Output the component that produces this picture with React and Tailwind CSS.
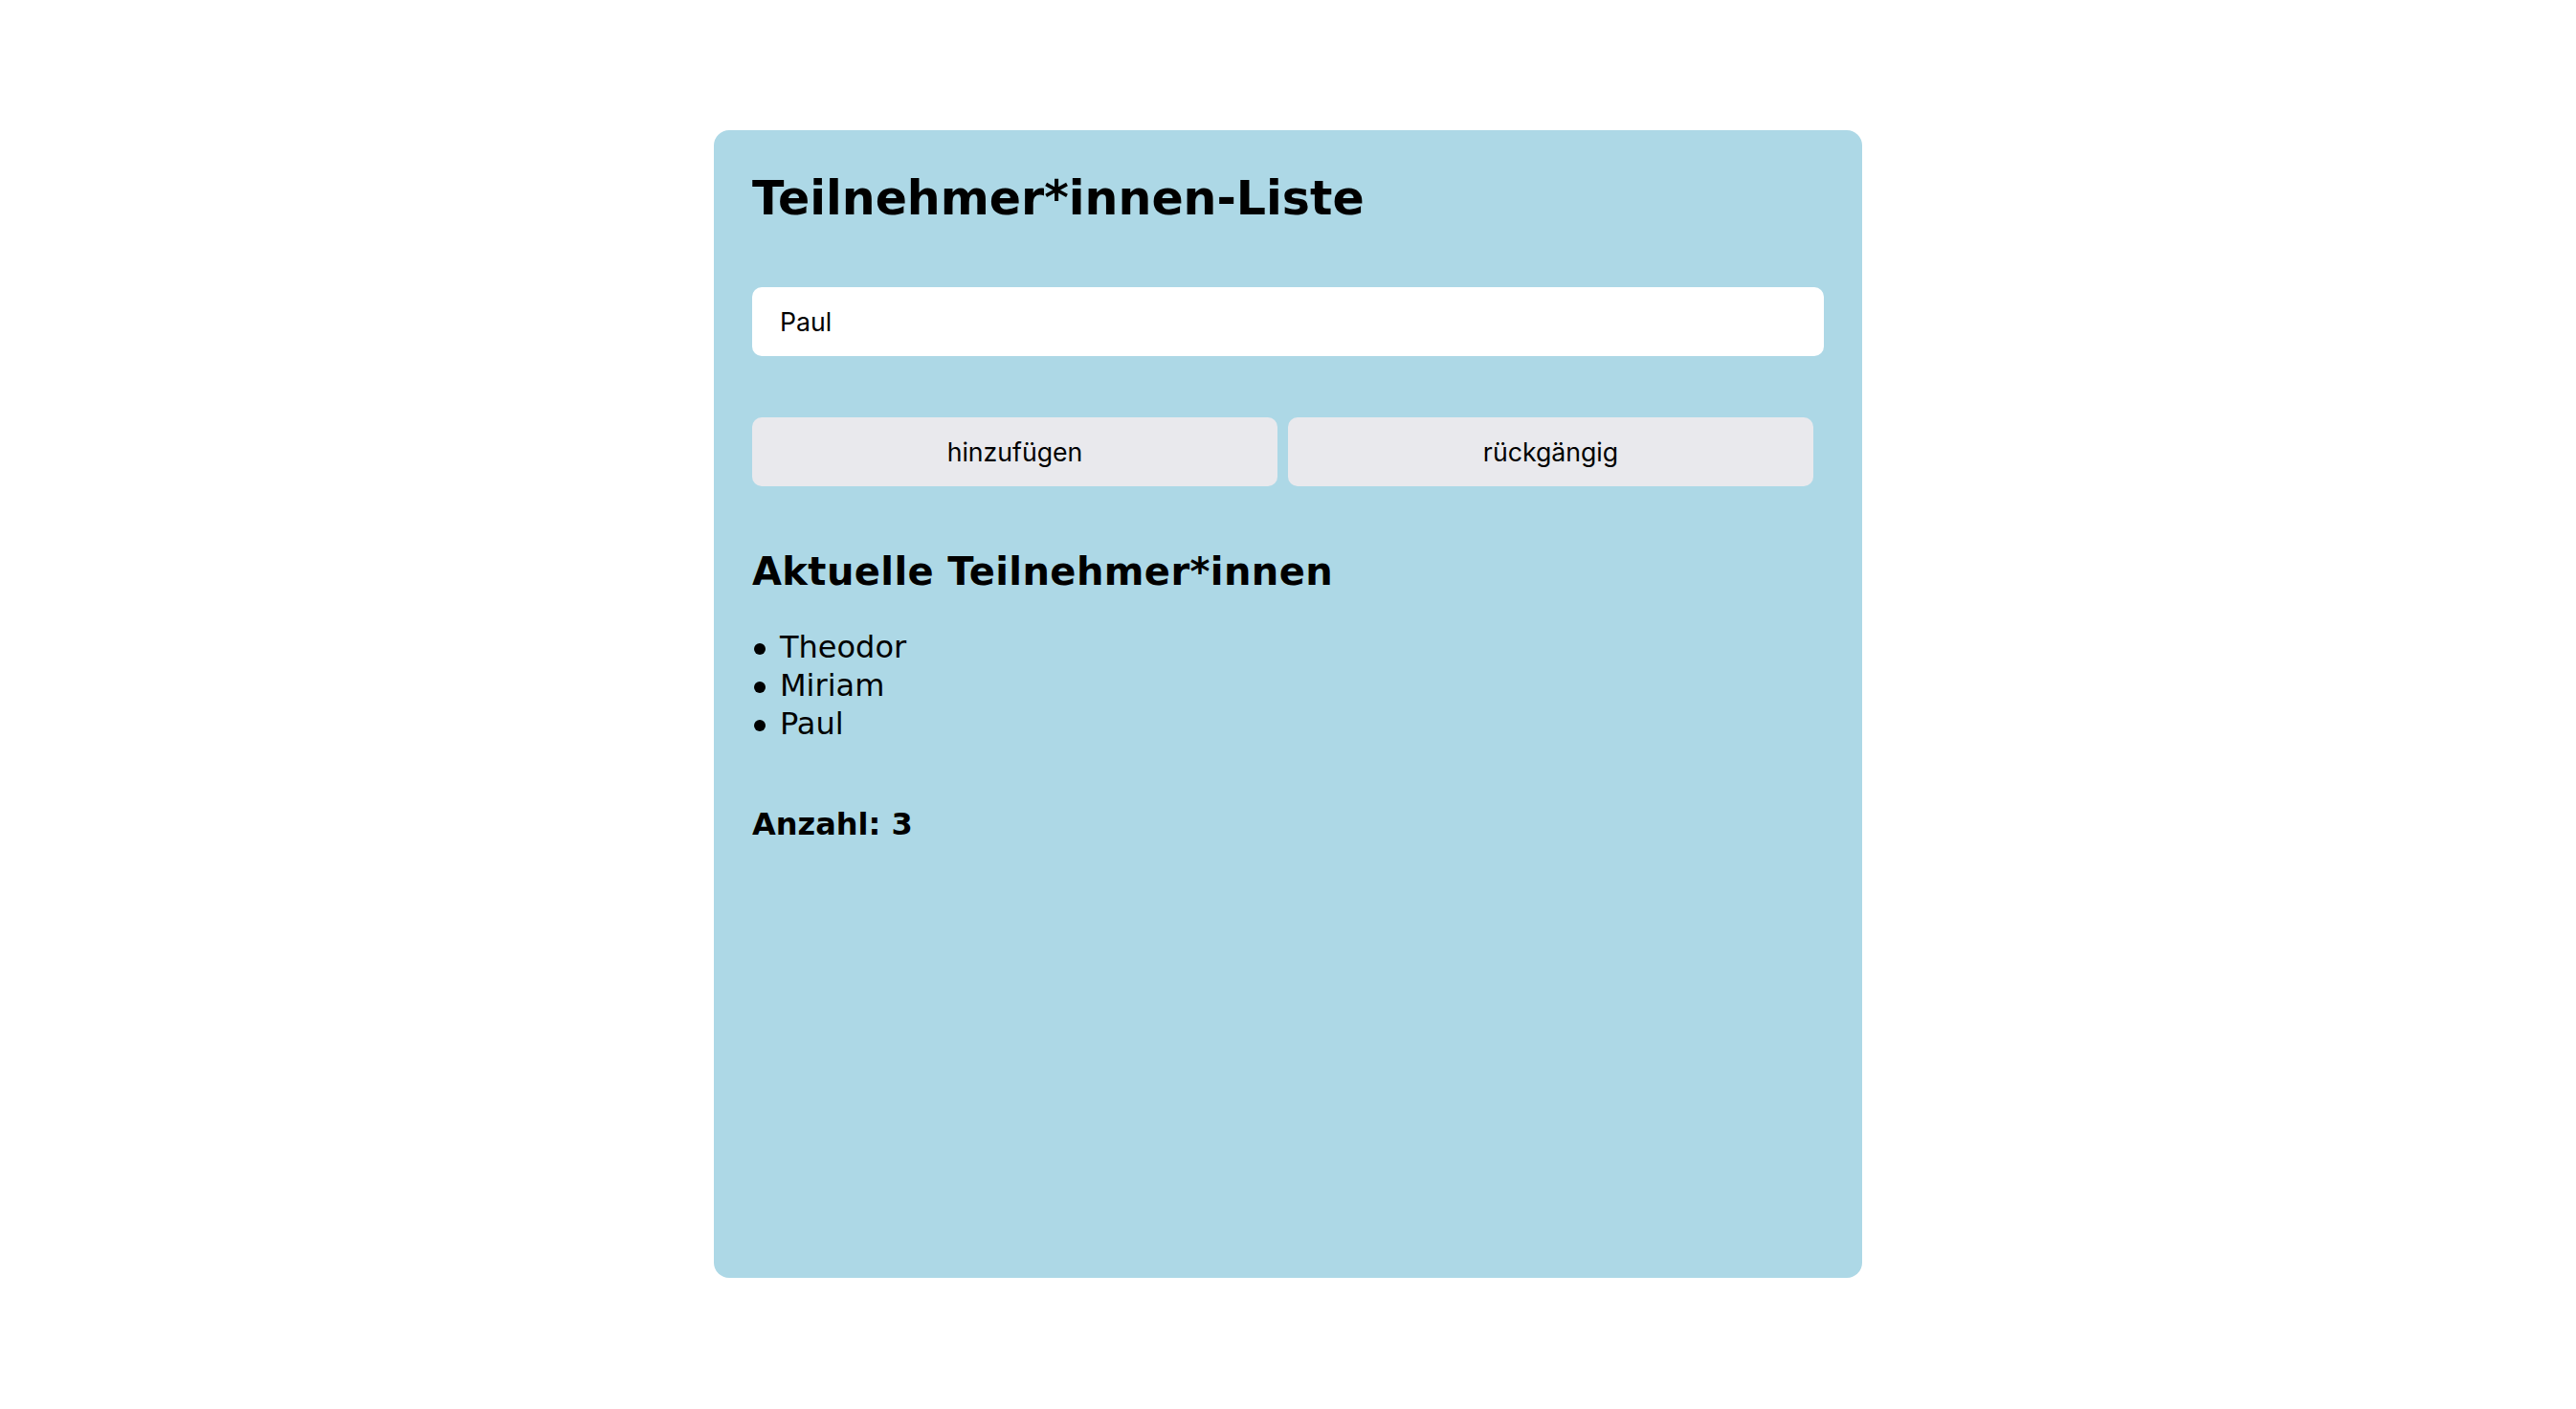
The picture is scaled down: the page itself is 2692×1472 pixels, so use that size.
import React from "react";

export default function App() {
  const names = ["Theodor", "Miriam", "Paul"];
  return (
    <div className="w-full min-h-screen bg-white pt-[136px] font-['DejaVu_Sans',Verdana,sans-serif] text-black">
      <div className="mx-auto w-[1200px] h-[1199px] bg-[#add8e6] rounded-[16px] px-[40px] pt-[44px] flex flex-col">
        <h1 className="text-[49px] leading-[56px] font-bold m-0">Teilnehmer*innen-Liste</h1>
        <input
          type="text"
          defaultValue="Paul"
          className="mt-[64px] w-[1120px] h-[72px] bg-white rounded-[10px] pl-[29px] pr-[20px] border-0 outline-none text-[26.67px] text-black font-['Inter',sans-serif]"
        />
        <div className="mt-[64px] flex gap-[11px]">
          <button className="w-[549px] h-[72px] bg-[#e9e9ed] rounded-[10px] text-[26.67px] text-black font-['Inter',sans-serif]">
            hinzufügen
          </button>
          <button className="w-[549px] h-[72px] bg-[#e9e9ed] rounded-[10px] text-[26.67px] text-black font-['Inter',sans-serif]">
            rückgängig
          </button>
        </div>
        <h2 className="mt-[66px] text-[40px] leading-[47px] font-bold tracking-[0.4px]">Aktuelle Teilnehmer*innen</h2>
        <ul className="mt-[35px] list-none p-0 m-0">
          {names.map((n) => (
            <li key={n} className="flex text-[32px] leading-[40px]">
              <span className="w-[29px] shrink-0 pt-[16px] pl-[2px]">
                <span className="block w-[12px] h-[12px] rounded-full bg-black"></span>
              </span>
              <span>{n}</span>
            </li>
          ))}
        </ul>
        <p className="mt-[65px] text-[32px] leading-[40px] font-bold">Anzahl: 3</p>
      </div>
    </div>
  );
}
